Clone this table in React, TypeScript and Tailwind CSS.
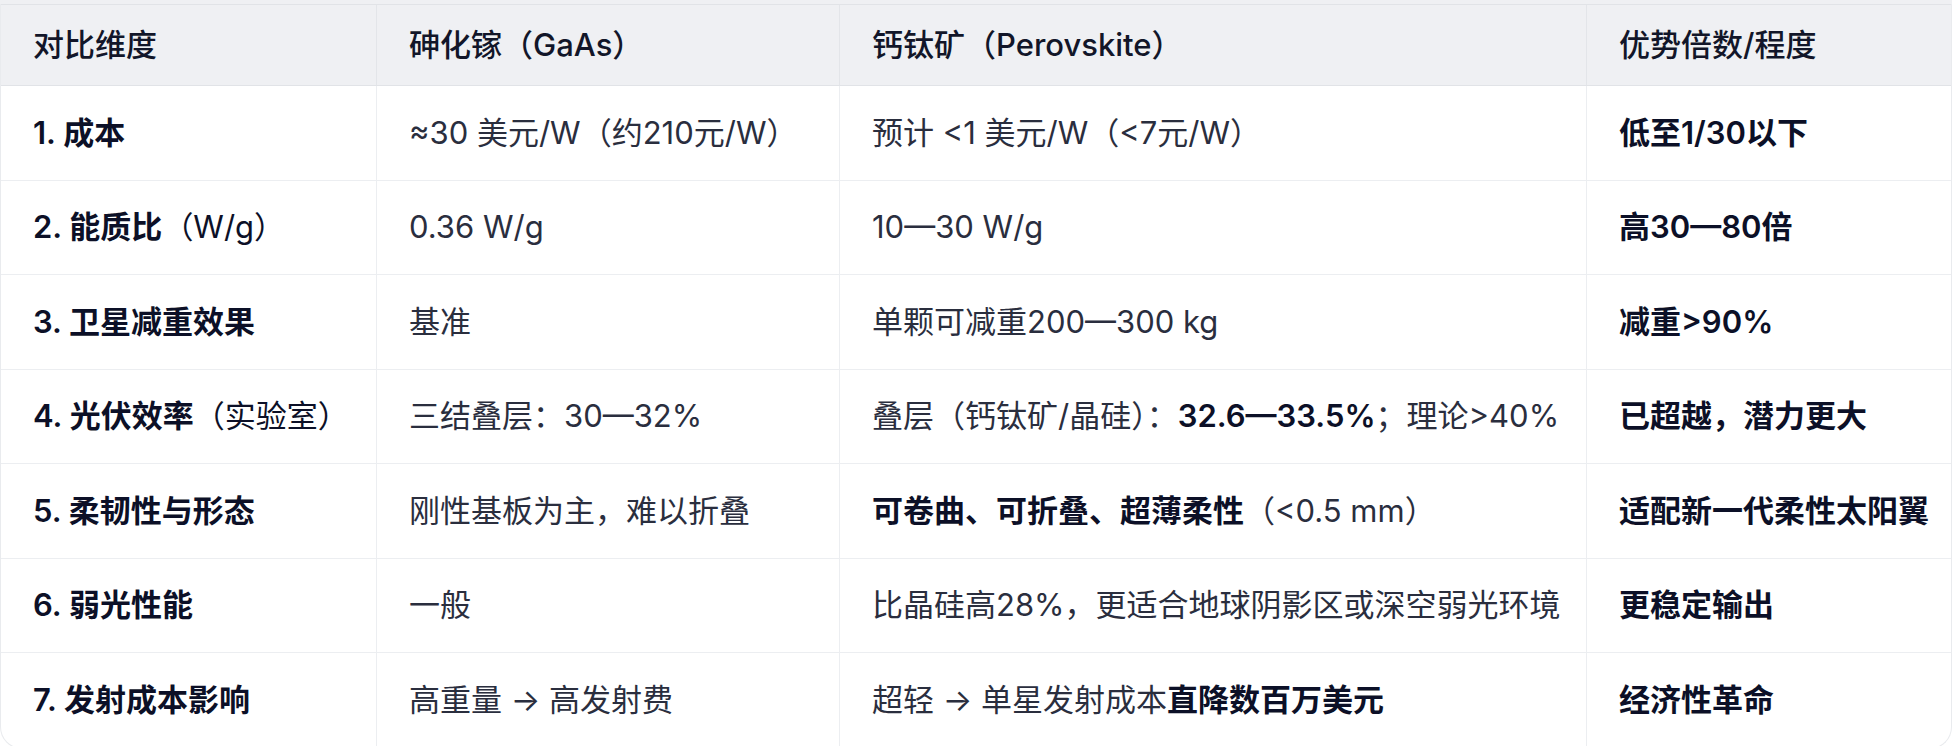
const font = { fontFamily: '"Inter", "Noto Sans CJK SC", sans-serif' };

type Cell = React.ReactNode;

const rows: Cell[][] = [
  [
    <>1. 成本</>,
    "≈30 美元/W（约210元/W）",
    "预计 <1 美元/W（<7元/W）",
    "低至1/30以下",
  ],
  [
    <>
      2. 能质比<span className="font-normal">（W/g）</span>
    </>,
    "0.36 W/g",
    "10—30 W/g",
    "高30—80倍",
  ],
  [<>3. 卫星减重效果</>, "基准", "单颗可减重200—300 kg", "减重>90%"],
  [
    <>
      4. 光伏效率<span className="font-normal">（实验室）</span>
    </>,
    "三结叠层：30—32%",
    <>
      叠层（钙钛矿/晶硅）：<b className="font-semibold text-[#0c1027]">32.6—33.5%</b>；理论&gt;40%
    </>,
    "已超越，潜力更大",
  ],
  [
    <>5. 柔韧性与形态</>,
    "刚性基板为主，难以折叠",
    <>
      <b className="font-semibold text-[#0c1027]">可卷曲、可折叠、超薄柔性</b>（&lt;0.5 mm）
    </>,
    "适配新一代柔性太阳翼",
  ],
  [<>6. 弱光性能</>, "一般", "比晶硅高28%，更适合地球阴影区或深空弱光环境", "更稳定输出"],
  [
    <>7. 发射成本影响</>,
    "高重量 → 高发射费",
    <>
      超轻 → 单星发射成本<b className="font-semibold text-[#0c1027]">直降数百万美元</b>
    </>,
    "经济性革命",
  ],
];

const headers = ["对比维度", "砷化镓（GaAs）", "钙钛矿（Perovskite）", "优势倍数/程度"];

const grid = "grid grid-cols-[375px_463px_747px_1fr]";

export default function App() {
  return (
    <div className="h-[746px] w-[1952px] overflow-hidden bg-white text-[31px]" style={font}>
      <div className="h-[4px] bg-[#eff0f3]" />
      <div className="overflow-hidden rounded-b-[22px] border-x border-b border-[#e9ebee]">
        {/* header */}
        <div className={`${grid} h-[82px] border-y border-[#e1e3e7] bg-[#eff0f3] text-[#121629]`}>
          {headers.map((h, i) => (
            <div
              key={i}
              className={`flex items-center px-[32px] font-medium ${i > 0 ? "border-l border-[#e3e5e9]" : ""}`}
            >
              {h}
            </div>
          ))}
        </div>

        {/* body */}
        {rows.map((r, ri) => (
          <div
            key={ri}
            className={`${grid} h-[94.5px] ${ri < rows.length - 1 ? "border-b border-[#eceef1]" : ""}`}
          >
            {r.map((c, ci) => (
              <div
                key={ci}
                className={`flex items-center whitespace-nowrap px-[32px] ${
                  ci > 0 ? "border-l border-[#eceef1]" : ""
                } ${
                  ci === 0 || ci === 3
                    ? "font-semibold text-[#0c1027]"
                    : "font-normal text-[#2a2e3e]"
                }`}
              >
                <span>{c}</span>
              </div>
            ))}
          </div>
        ))}
      </div>
    </div>
  );
}
